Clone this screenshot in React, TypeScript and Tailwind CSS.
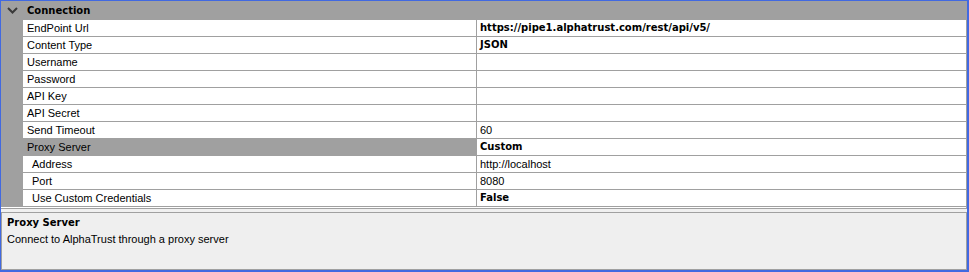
type PropertyRow = {
  label: string;
  value: string;
  bold?: boolean;
  indent?: boolean;
  selected?: boolean;
};

const rows: PropertyRow[] = [
  { label: "EndPoint Url", value: "https://pipe1.alphatrust.com/rest/api/v5/", bold: true },
  { label: "Content Type", value: "JSON", bold: true },
  { label: "Username", value: "" },
  { label: "Password", value: "" },
  { label: "API Key", value: "" },
  { label: "API Secret", value: "" },
  { label: "Send Timeout", value: "60" },
  { label: "Proxy Server", value: "Custom", bold: true, selected: true },
  { label: "Address", value: "http://localhost", indent: true },
  { label: "Port", value: "8080", indent: true },
  { label: "Use Custom Credentials", value: "False", bold: true, indent: true },
];

const regular = "font-['Liberation_Sans',Arial,sans-serif] text-[11px]";
const bold = "font-['DejaVu_Sans',Verdana,sans-serif] text-[10px] font-bold";

const App = () => {
  return (
    <div className="flex h-[272px] w-[969px] flex-col border-t border-l border-r-2 border-b-2 border-[#4169e1] bg-[#f0f0f0] text-black">
      {/* Property grid */}
      <div className="flex flex-col border-r border-[#a0a0a0]">
        <div className="flex h-[19px] items-center bg-[#a0a0a0]">
          <div className="flex w-[22px] shrink-0 justify-center pl-[1px]">
            <svg width="11" height="7" viewBox="0 0 11 7">
              <polyline
                points="1,1 5.5,5.5 10,1"
                fill="none"
                stroke="#3a3a3a"
                strokeWidth="2"
              />
            </svg>
          </div>
          <span className={`${bold} pl-[4px] leading-[19px]`}>Connection</span>
        </div>

        {rows.map((row) => (
          <div key={row.label} className="flex h-[17px]">
            <div className="w-[22px] shrink-0 bg-[#a0a0a0]" />
            <div className="flex flex-1 border-b border-[#a0a0a0] bg-white">
              <div
                className={`flex w-[454px] shrink-0 items-center border-r border-[#a0a0a0] ${
                  row.indent ? "pl-[9px]" : "pl-[4px]"
                } ${row.selected ? "bg-[#a0a0a0]" : ""}`}
              >
                <span className={`${regular} leading-[16px]`}>{row.label}</span>
              </div>
              <div className="flex flex-1 items-center pl-[3px]">
                <span className={`${row.bold ? bold : regular} leading-[16px]`}>
                  {row.value}
                </span>
              </div>
            </div>
          </div>
        ))}

        <div className="h-[2px] border-b border-[#a0a0a0] bg-white" />
      </div>

      {/* Description panel */}
      <div className="mt-[3px] flex flex-1 flex-col border border-[#a0a0a0] bg-[#efefef] px-[5px] pt-[2px]">
        <span className={`${bold} leading-[16px]`}>Proxy Server</span>
        <span className={`${regular} leading-[16px]`}>
          Connect to AlphaTrust through a proxy server
        </span>
      </div>
    </div>
  );
};

export default App;
